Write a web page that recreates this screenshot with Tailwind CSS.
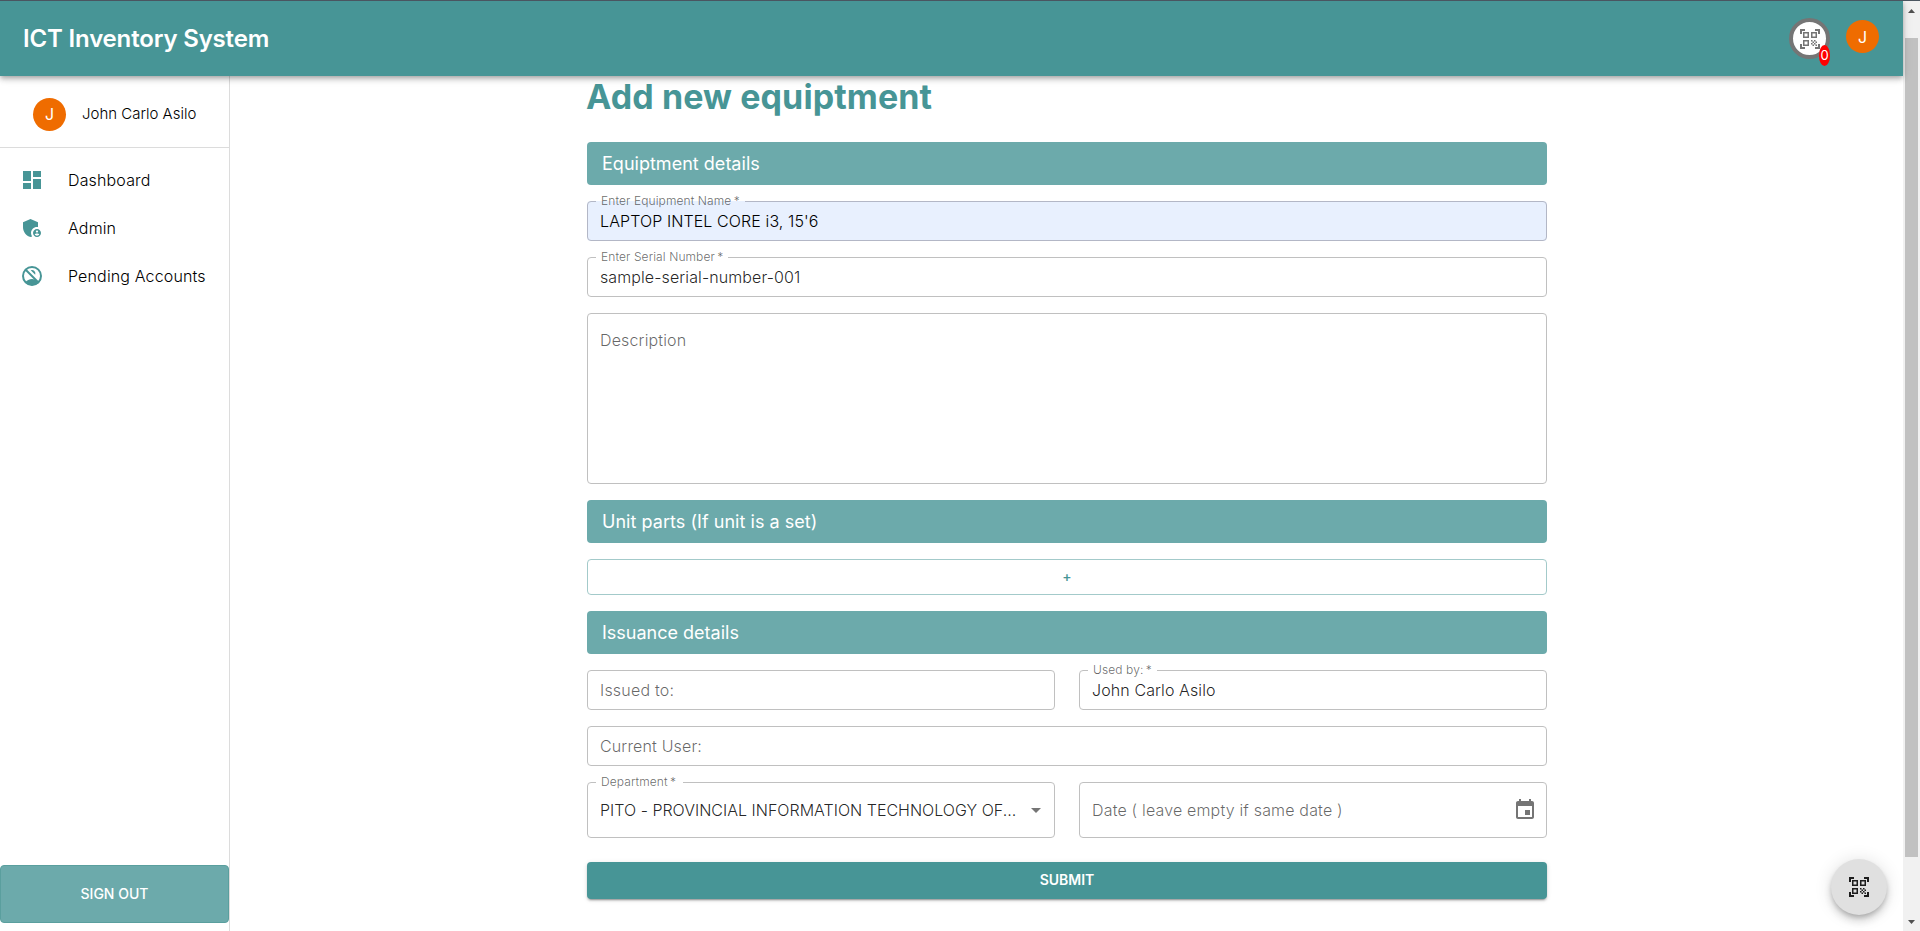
<!DOCTYPE html>
<html lang="en">
<head>
<meta charset="utf-8">
<title>ICT Inventory System</title>
<script src="https://cdn.jsdelivr.net/npm/@tailwindcss/browser@4"></script>
</head>
<body class="h-[931px] overflow-hidden bg-white font-['Inter',sans-serif] font-light text-black/87">
<div class="flex h-full">
  <div class="flex min-w-0 flex-1 flex-col">
    <header class="relative z-10 flex h-[76px] shrink-0 items-center justify-between border-t border-[#4a5560] bg-[#479596] pr-6 pl-[23px] shadow-[0_2px_4px_-1px_rgba(0,0,0,0.2),0_4px_5px_0_rgba(0,0,0,0.14),0_1px_10px_0_rgba(0,0,0,0.12)]">
      <h1 class="text-2xl leading-8 font-semibold tracking-[-0.17px] text-white">ICT Inventory System</h1>
      <div class="flex items-center gap-4">
        <div class="relative flex size-[41px] items-center justify-center rounded-full border-4 border-[#757575] bg-white text-[#757575]">
          <svg class="size-6 shrink-0" viewBox="0 0 24 24" fill="currentColor"><path d="M9.5 6.5v3h-3v-3h3M11 5H5v6h6V5zm-1.5 9.5v3h-3v-3h3M11 13H5v6h6v-6zm6.5-6.5v3h-3v-3h3M19 5h-6v6h6V5zm-6 8h1.5v1.5H13V13zm1.5 1.5H16V16h-1.5v-1.5zM16 13h1.5v1.5H16V13zm-3 3h1.5v1.5H13V16zm1.5 1.5H16V19h-1.5v-1.5zM16 16h1.5v1.5H16V16zm1.5-1.5H19V16h-1.5v-1.5zm0 3H19V19h-1.5v-1.5zM22 7h-2V4h-3V2h5v5zm0 15v-5h-2v3h-3v2h5zM2 22h5v-2H4v-3H2v5zM2 2v5h2V4h3V2H2z"/></svg>
          <span class="absolute top-[23px] left-[26px] flex h-[21px] w-[11px] items-center justify-center rounded-[50%] bg-[#ff0000] text-[13px] font-normal text-white">0</span>
        </div>
        <div class="mb-1 flex size-[33px] items-center justify-center rounded-full bg-[#ef6c00] text-base font-normal text-white">J</div>
      </div>
    </header>
    <div class="flex min-h-0 flex-1">
      <aside class="flex w-[230px] shrink-0 flex-col border-r border-[#dcdcdc] text-black">
        <div class="flex h-[72px] items-center gap-4 border-b border-[#dcdcdc] pt-[5px] pl-[33px]">
          <div class="flex size-[33px] items-center justify-center rounded-full bg-[#ef6c00] text-base font-normal text-white">J</div>
          <span class="text-[15px]">John Carlo Asilo</span>
        </div>
        <nav class="flex flex-col pt-2 text-base tracking-[0.15px]">
          <a class="flex h-12 items-center gap-6 pl-5"><svg class="size-6 text-[#479596]" viewBox="0 0 24 24" fill="currentColor"><path d="M3 13h8V3H3v10zm0 8h8v-6H3v6zm10 0h8V11h-8v10zm0-18v6h8V3h-8z"/></svg>Dashboard</a>
          <a class="flex h-12 items-center gap-6 pl-5"><svg class="size-6 text-[#479596]" viewBox="0 0 24 24" fill="currentColor"><path d="M17 11c.34 0 .67.04 1 .09V6.27L10.5 3 3 6.27v4.91c0 4.54 3.2 8.79 7.5 9.82.55-.13 1.08-.32 1.6-.55-.69-.98-1.1-2.17-1.1-3.45 0-3.31 2.69-6 6-6z"/><path d="M17 13c-2.21 0-4 1.79-4 4s1.79 4 4 4 4-1.79 4-4-1.79-4-4-4zm0 1.38c.62 0 1.12.51 1.12 1.12s-.51 1.12-1.12 1.12-1.12-.51-1.12-1.12.5-1.12 1.12-1.12zm0 5.37c-.93 0-1.74-.46-2.24-1.17.05-.72 1.51-1.08 2.24-1.08s2.19.36 2.24 1.08c-.5.71-1.31 1.17-2.24 1.17z"/></svg>Admin</a>
          <a class="flex h-12 items-center gap-6 pl-5"><svg class="size-6 text-[#479596]" viewBox="0 0 24 24" fill="none" stroke="currentColor" stroke-width="2"><circle cx="12" cy="12" r="9"/><path d="M5.2 5.200l13.500 13.500"/><path d="M10.700 6.300A3.500 3.500 0 0 1 15.200 10.800z" fill="currentColor" stroke="none"/><path d="M5 18.300C6.800 16.300 9.400 15 12 15c1 0 2 .2 3 .6l4 3C17.200 20.400 14.700 21.300 12 21.300s-5.200-1-7-3z" fill="currentColor" stroke="none"/></svg>Pending Accounts</a>
        </nav>
        <button class="mt-auto mb-2 h-[58px] w-[229px] rounded-[4px] border border-[#5a9f9e] bg-[#6caaab] text-sm font-medium text-white">SIGN OUT</button>
      </aside>
      <main class="flex min-w-0 flex-1 flex-col pl-[357px]">
        <form class="flex w-[960px] flex-col gap-4 text-base tracking-[0.1px]">
          <h2 class="-mb-px -ml-px h-[51px] text-[34px] leading-[42px] font-bold tracking-[0.1px] text-[#479596]">Add new equiptment</h2>
          <div class="flex h-[43px] items-center rounded-[4px] bg-[#6caaab] pl-[15px] text-lg font-normal tracking-[0.02px] text-white">Equiptment details</div>
          <div class="relative flex h-10 items-center rounded-[4px] bg-[#e8f0fe] pb-px pl-[13px] text-black">
            <fieldset class="absolute inset-x-0 -top-[5px] bottom-0 rounded-[4px] border border-[#b3b7c6] pl-2"><legend class="h-[11px] w-[149px]"></legend></fieldset>
            <label class="absolute -top-[9px] left-[14px] text-xs leading-[17px] text-black/60">Enter Equipment Name&thinsp;*</label>
            <span>LAPTOP INTEL CORE i3, 15'6</span>
          </div>
          <div class="relative flex h-10 items-center pb-px pl-[13px]">
            <fieldset class="absolute inset-x-0 -top-[5px] bottom-0 rounded-[4px] border border-[#c0c0c0] pl-2"><legend class="h-[11px] w-[132px]"></legend></fieldset>
            <label class="absolute -top-[9px] left-[14px] text-xs leading-[17px] text-black/60">Enter Serial Number&thinsp;*</label>
            <span>sample-serial-number-001</span>
          </div>
          <div class="h-[171px] rounded-[4px] border border-[#c0c0c0] pt-[14px] pl-3 tracking-[0.15px] text-black/60">Description</div>
          <div class="flex h-[43px] items-center rounded-[4px] bg-[#6caaab] pl-[15px] text-lg font-normal tracking-[0.04px] text-white">Unit parts (If unit is a set)</div>
          <div class="flex h-9 items-center justify-center rounded-[4px] border border-[#a3caca] text-sm font-medium text-[#479596]">+</div>
          <div class="flex h-[43px] items-center rounded-[4px] bg-[#6caaab] pl-[15px] text-lg font-normal tracking-[0px] text-white">Issuance details</div>
          <div class="grid grid-cols-2 gap-6">
            <div class="flex h-10 items-center rounded-[4px] border border-[#c0c0c0] pl-3 tracking-[0.2px] text-black/60">Issued to:</div>
            <div class="relative flex h-10 items-center pl-[13px]">
              <fieldset class="absolute inset-x-0 -top-[5px] bottom-0 rounded-[4px] border border-[#c0c0c0] pl-2"><legend class="h-[11px] w-[69px]"></legend></fieldset>
              <label class="absolute -top-[9px] left-[14px] text-xs leading-[17px] text-black/60">Used by:&thinsp;*</label>
              <span>John Carlo Asilo</span>
            </div>
          </div>
          <div class="flex h-10 items-center rounded-[4px] border border-[#c0c0c0] pl-3 tracking-[0.15px] text-black/60">Current User:</div>
          <div class="grid grid-cols-2 gap-6">
            <div class="relative flex h-14 items-center justify-between pr-[7px] pl-[13px]">
              <fieldset class="absolute inset-x-0 -top-[5px] bottom-0 rounded-[4px] border border-[#c0c0c0] pl-2"><legend class="h-[11px] w-[87px]"></legend></fieldset>
              <label class="absolute -top-[9px] left-[14px] text-xs leading-[17px] text-black/60">Department&thinsp;*</label>
              <span class="tracking-[0.01px] whitespace-nowrap">PITO - PROVINCIAL INFORMATION TECHNOLOGY OF...</span>
              <svg class="size-6 shrink-0 text-[#757575]" viewBox="0 0 24 24" fill="currentColor"><path d="M7 10l5 5 5-5z"/></svg>
            </div>
            <div class="flex h-14 items-center justify-between rounded-[4px] border border-[#c0c0c0] pr-[9px] pl-3 tracking-[0.17px] text-black/60"><span class="mb-px">Date ( leave empty if same date )</span>
              <svg class="size-6 text-[#757575]" viewBox="0 0 24 24" fill="currentColor"><path d="M17 12h-5v5h5v-5zM16 1v2H8V1H6v2H5c-1.110 0-1.990.9-1.990 2L3 19c0 1.100.89 2 2 2h14c1.100 0 2-.9 2-2V5c0-1.100-.9-2-2-2h-1V1h-2zm3 18H5V8h14v11z"/></svg>
            </div>
          </div>
          <button class="mt-2 h-[37px] rounded-[4px] bg-[#479596] pb-0.5 text-sm font-semibold tracking-[0px] text-white shadow-[0_3px_1px_-2px_rgba(0,0,0,0.2),0_2px_2px_0_rgba(0,0,0,0.14),0_1px_5px_0_rgba(0,0,0,0.12)]">SUBMIT</button>
        </form>
      </main>
    </div>
  </div>
  <div class="flex w-[17px] shrink-0 flex-col items-center border-t border-[#4a5560] bg-[#f1f1f1]">
    <svg class="h-[37px] w-[17px] shrink-0" viewBox="0 0 17 37"><path d="M5 12h7L8.500 8z" fill="#505050"/></svg>
    <div class="h-[819px] w-[13px] bg-[#c1c1c1]"></div>
    <svg class="mt-auto h-[17px] w-[17px]" viewBox="0 0 17 17"><path d="M5 6h7l-3.500 4z" fill="#505050"/></svg>
  </div>
</div>
<button class="fixed top-[859px] left-[1831px] flex size-14 items-center justify-center rounded-full bg-[#e0e0e0] text-black/87 shadow-[0_3px_5px_-1px_rgba(0,0,0,0.2),0_6px_10px_0_rgba(0,0,0,0.14),0_1px_18px_0_rgba(0,0,0,0.12)]">
  <svg class="size-6" viewBox="0 0 24 24" fill="currentColor"><path d="M9.500 6.500v3h-3v-3h3M11 5H5v6h6V5zm-1.500 9.500v3h-3v-3h3M11 13H5v6h6v-6zm6.500-6.500v3h-3v-3h3M19 5h-6v6h6V5zm-6 8h1.500v1.500H13V13zm1.500 1.500H16V16h-1.500v-1.500zM16 13h1.500v1.500H16V13zm-3 3h1.500v1.500H13V16zm1.500 1.500H16V19h-1.500v-1.500zM16 16h1.500v1.500H16V16zm1.500-1.500H19V16h-1.500v-1.500zm0 3H19V19h-1.500v-1.500zM22 7h-2V4h-3V2h5v5zm0 15v-5h-2v3h-3v2h5zM2 22h5v-2H4v-3H2v5zM2 2v5h2V4h3V2H2z"/></svg>
</button>
</body>
</html>
